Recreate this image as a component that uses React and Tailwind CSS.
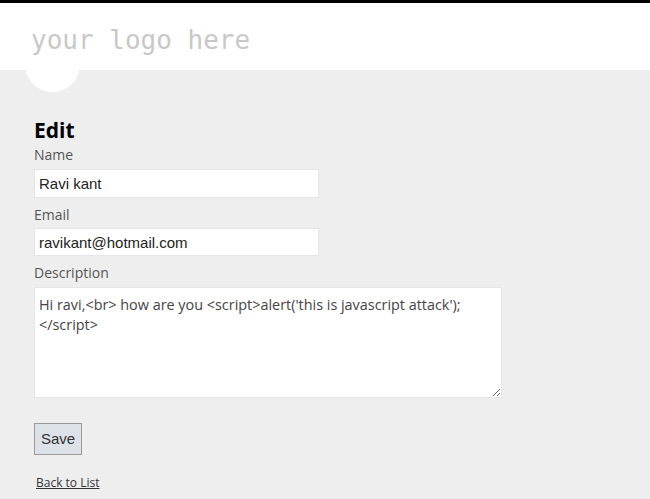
export default function App() {
  const ui = { fontFamily: '"Open Sans", "Noto Sans", sans-serif' };
  const field = { fontFamily: '"Liberation Sans", Arial, sans-serif' };
  return (
    <div className="w-[650px] h-[499px] overflow-hidden bg-[#eeeeee] border-t-[3px] border-black">
      {/* header with logo placeholder */}
      <header className="relative h-[67px] bg-white">
        <div className="absolute left-[25px] top-[34px] w-[55px] h-[55px] rounded-full bg-white" />
        <div
          className="relative pl-[31px] pt-[22px] text-[26px] leading-[30px] text-[#c8c8c8]"
          style={{ fontFamily: '"DejaVu Sans Mono", "Liberation Mono", monospace' }}
        >
          your logo here
        </div>
      </header>

      <main className="pl-[34px] pt-[48px]" style={ui}>
        <h2 className="text-[21px] leading-[24px] font-bold text-black">Edit</h2>
        <form className="flex flex-col">
          <label className="mt-[3px] text-[14px] leading-[19px] text-[#555]">Name</label>
          <input
            readOnly
            value="Ravi kant"
            className="mt-[5px] w-[285px] h-[29px] px-[4px] bg-white border border-[#e6e6e6] text-[15px] text-[#222] outline-none"
            style={field}
          />
          <label className="mt-[7px] text-[14px] leading-[19px] text-[#555]">Email</label>
          <input
            readOnly
            value="ravikant@hotmail.com"
            className="mt-[4px] w-[285px] h-[28px] px-[4px] bg-white border border-[#e6e6e6] text-[15px] text-[#222] outline-none"
            style={field}
          />
          <label className="mt-[7px] text-[14px] leading-[19px] text-[#555]">Description</label>
          <textarea
            readOnly
            value={"Hi ravi,<br> how are you <script>alert('this is javascript attack');\n</script>"}
            className="mt-[5px] w-[468px] h-[111px] px-[4px] pt-[7px] bg-white border border-[#e6e6e6] text-[14.4px] leading-[20px] text-[#444] outline-none resize"
            style={ui}
          />
          <div className="mt-[25px]">
            <button
              type="button"
              className="w-[48px] h-[32px] bg-[#dce2e7] border border-[#9a9a9a] text-[15px] text-[#333]"
              style={field}
            >
              Save
            </button>
          </div>
          <a href="#" className="mt-[20px] ml-[2px] text-[12px] leading-[16px] text-[#333] underline w-fit">
            Back to List
          </a>
        </form>
      </main>
    </div>
  );
}
